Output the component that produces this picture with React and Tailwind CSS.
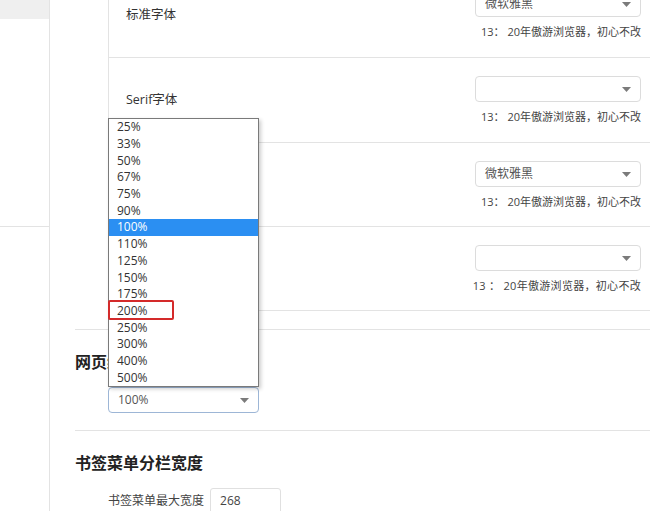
import React from "react";

const zoomLevels = ["25%", "33%", "50%", "67%", "75%", "90%", "100%", "110%", "125%", "150%", "175%", "200%", "250%", "300%", "400%", "500%"];

const fontRows = [
  { label: "标准字体", value: "微软雅黑", h: "h-[85px]" },
  { label: "Serif字体", value: "", h: "h-[85px]" },
  { label: "", value: "微软雅黑", h: "h-[84px]" },
  { label: "", value: "", h: "h-[84px]", alt: true },
];

function Arrow() {
  return (
    <svg width="9" height="5" viewBox="0 0 9 5" className="shrink-0">
      <polygon points="0,0 9,0 4.5,5" fill="#7b7b7b" />
    </svg>
  );
}

function Select({ value, className = "" }) {
  return (
    <div className={`h-[26px] flex items-center justify-between rounded-[4px] border pl-[9px] pr-[9px] text-[12px] text-[#555] ${className}`}>
      <span>{value}</span>
      <Arrow />
    </div>
  );
}

export default function App() {
  return (
    <div className="w-[650px] h-[511px] overflow-hidden bg-white flex font-['Open_Sans','Noto_Sans_CJK_SC',sans-serif] text-[#333]">
      {/* sidebar */}
      <aside className="w-[50px] shrink-0 border-r border-[#e3e3e3] flex flex-col">
        <div className="h-[19px] bg-[#efefef]" />
        <div className="h-[208px] border-b border-[#e3e3e3]" />
      </aside>

      <main className="flex-1 relative flex flex-col pl-[25px]">
        {/* font rows */}
        <div className="ml-[33px] mt-[-27px] border-l border-[#e3e3e3]">
          {fontRows.map((row, i) => (
            <div key={i} className={`${row.h} flex justify-between border-b border-[#e3e3e3] pl-[17px] pr-[9px]`}>
              <span className="self-center text-[12.5px] text-[#333]">{row.label}</span>
              <div className="flex flex-col items-end pt-[18px]">
                <Select value={row.value} className="w-[166px] border-[#dcdcdc]" />
                <p className={`mt-[8px] text-[11px] leading-[14px] text-[#444] ${row.alt ? "tracking-[0.3px]" : ""}`}>
                  {row.alt ? "13 ： 20年傲游浏览器，初心不改" : "13： 20年傲游浏览器，初心不改"}
                </p>
              </div>
            </div>
          ))}
        </div>

        {/* page zoom */}
        <section className="mt-[18px] border-t border-[#e3e3e3] pt-[22px] pb-[17px]">
          <h2 className="text-[16px] leading-[20px] font-bold text-[#222]">网页缩放</h2>
          <Select value="100%" className="mt-[15px] ml-[33px] w-[151px] border-[#9db6d6] text-[#333]" />
        </section>

        {/* bookmark width */}
        <section className="border-t border-[#e3e3e3] pt-[22px]">
          <h2 className="text-[16px] leading-[20px] font-bold text-[#222]">书签菜单分栏宽度</h2>
          <div className="mt-[15px] ml-[33px] flex items-center gap-[6px]">
            <span className="text-[12px] text-[#444]">书签菜单最大宽度</span>
            <div className="w-[71px] h-[26px] flex items-center rounded-[3px] border border-[#e0e0e0] pl-[9px] text-[12px] text-[#444]">268</div>
          </div>
        </section>

        {/* open dropdown list */}
        <div className="absolute left-[58px] top-[118px] w-[151px] h-[269px] bg-white border border-[#7a7a7a] shadow-[2px_2px_4px_rgba(0,0,0,0.2)] flex flex-col z-10">
          {zoomLevels.map((z) => (
            <div
              key={z}
              className={`flex-1 min-h-0 flex items-center pl-[8px] text-[12px] leading-[14px] ${z === "100%" ? "bg-[#2b8ff2] text-white" : "text-[#333]"}`}
            >
              {z}
            </div>
          ))}
          <div className="absolute left-[-1px] top-[181px] w-[66px] h-[20px] border-2 border-[#d42a2a] rounded-[2px]" />
        </div>
      </main>
    </div>
  );
}
